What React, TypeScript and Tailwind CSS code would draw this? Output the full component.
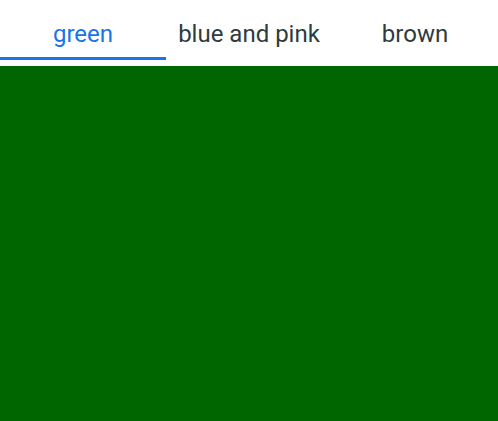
import React, { useState } from 'react';

const tabs = [
  { id: 'green', label: 'green' },
  { id: 'bluepink', label: 'blue and pink' },
  { id: 'brown', label: 'brown' },
];

export default function App() {
  const [active, setActive] = useState('green');

  return (
    <div className="w-[498px] h-[421px] bg-white flex flex-col overflow-hidden" style={{ fontFamily: 'Roboto, "Open Sans", sans-serif' }}>
      <div className="flex h-[60px] shrink-0">
        {tabs.map((t) => (
          <button
            key={t.id}
            onClick={() => setActive(t.id)}
            className={`flex-1 flex items-center justify-center text-[24px] pt-[10px] border-b-[3px] ${
              active === t.id ? 'text-[#1a73e8] border-[#1a73e8]' : 'text-[#2d3b40] border-transparent'
            }`}
          >
            {t.label}
          </button>
        ))}
      </div>
      <div className="flex-1 mt-[6px] bg-[#006600]" />
    </div>
  );
}
